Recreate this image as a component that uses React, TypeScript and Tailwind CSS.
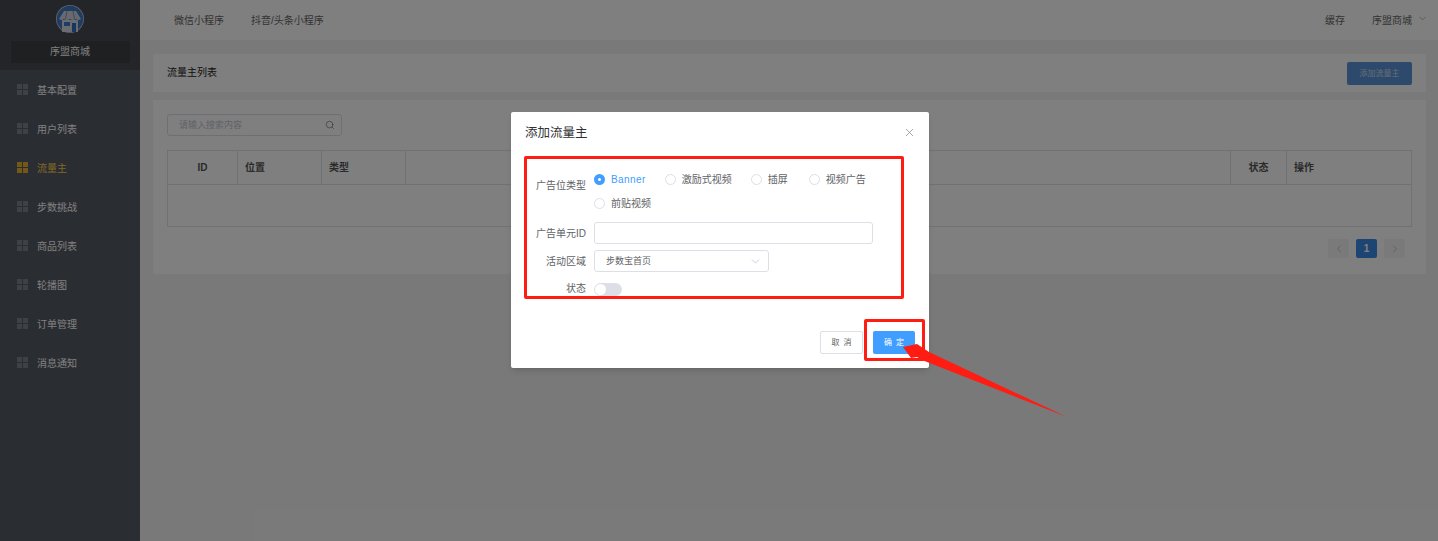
import React from 'react';
import { X, ChevronDown, ChevronLeft, ChevronRight, Search } from 'lucide-react';

const menu = ['基本配置', '用户列表', '流量主', '步数挑战', '商品列表', '轮播图', '订单管理', '消息通知'];
const radios = ['Banner', '激励式视频', '插屏', '视频广告', '前贴视频'];
const font = 'font-["Liberation_Sans","Noto_Sans_CJK_SC",sans-serif]';

const GridIcon: React.FC<{ active: boolean }> = ({ active }) => (
  <div className="grid grid-cols-2 gap-[1px] w-[11px] mr-[9px] -mt-[2px]">
    {[0, 1, 2, 3].map((i) => (
      <span key={i} className={`h-[5px] w-[5px] ${active ? 'bg-[#e8b030]' : 'bg-[#7f838a]'}`} />
    ))}
  </div>
);

const Logo = () => (
  <svg viewBox="0 0 28 28" className="w-[28px] h-[28px]">
    <circle cx="14" cy="14" r="14" fill="#c5c8cc" />
    <circle cx="14" cy="14" r="13.2" fill="#3f78c4" />
    <path d="M6 15 H22 V27 H6 Z" fill="#d5d9e0" />
    <path d="M3 14 L8 6 H20 L25 14 Q22.5 16 20 14 Q17 16 14 14 Q11 16 8 14 Q5.5 16 3 14 Z" fill="#cfd3dc" />
    <path d="M11 6 L9.5 14 M17 6 L18.5 14" stroke="#8a93a5" strokeWidth="1" />
    <rect x="8" y="17" width="6" height="4" fill="#3f78c4" />
    <rect x="16" y="18" width="4" height="9" fill="#2f6cc0" />
  </svg>
);

const Sidebar = () => (
  <aside className="w-[140px] shrink-0 bg-[#555a63]">
    <div className="h-[70px] bg-[#474b53] flex flex-col items-center pt-[5px]">
      <Logo />
      <div className="mt-[8px] w-[119px] h-[22px] rounded-[2px] bg-[#3d4045] text-white text-[10px] pb-[2px] flex items-center justify-center">序盟商城</div>
    </div>
    <div className="pt-[1px]">
      {menu.map((m, i) => (
        <div key={m} className={`h-[39px] flex items-center pl-[17px] text-[10px] ${i === 2 ? 'text-[#ffd04b]' : 'text-white'}`}>
          <GridIcon active={i === 2} />
          {m}
        </div>
      ))}
    </div>
  </aside>
);

const cols = [
  { w: 'w-[70px]', label: 'ID', cls: 'justify-center' },
  { w: 'w-[84px]', label: '位置', cls: 'pl-[7px]' },
  { w: 'w-[84px]', label: '类型', cls: 'pl-[7px]' },
  { w: 'flex-1', label: '', cls: '' },
  { w: 'w-[56px]', label: '状态', cls: 'justify-center' },
  { w: 'w-[124px]', label: '操作', cls: 'pl-[7px]' },
];

const Main = () => (
  <main className="flex-1 min-w-0 flex flex-col">
    <header className="h-[40px] bg-white flex items-center text-[10px] text-[#666] pl-[34px] pr-[10px]">
      <span>微信小程序</span>
      <span className="ml-[27px]">抖音/头条小程序</span>
      <span className="ml-auto">缓存</span>
      <span className="ml-[27px]">序盟商城</span>
      <ChevronDown strokeWidth={1.5} className="w-[11px] h-[11px] ml-[5px] -mt-[4px] text-[#999]" />
    </header>
    <div className="pl-[13px] pr-[12px] pt-[14px]">
      <div className="h-[38px] bg-white flex items-center justify-between pl-[14px] pr-[14px]">
        <span className="text-[10px] text-[#222] -mt-[1px]">流量主列表</span>
        <button className="w-[65px] h-[23px] pt-[2px] rounded-[2px] bg-[#5b93d6] text-white/70 text-[8px]">添加流量主</button>
      </div>
      <div className="mt-[8px] h-[174px] bg-white px-[14px] pt-[14px]">
        <div className="w-[175px] h-[22px] rounded-[3px] border border-[#dcdfe6] flex items-center pl-[11px] pr-[6px] text-[9px] text-[#c0c4cc]">
          <span className="pt-[2px]">请输入搜索内容</span>
          <Search strokeWidth={1.5} className="w-[10px] h-[10px] ml-auto text-[#666]" />
        </div>
        <div className="mt-[14px] border border-[#e0e3ea] h-[77px]">
          <div className="flex h-[34px] border-b border-[#e0e3ea] text-[10px] font-bold text-[#555]">
            {cols.map((c, i) => (
              <div key={i} className={`${c.w} flex items-center ${c.cls} ${i < cols.length - 1 ? 'border-r border-[#e0e3ea]' : ''}`}>{c.label}</div>
            ))}
          </div>
        </div>
        <div className="flex justify-end gap-[7px] mt-[12px] pr-[7px]">
          <div className="w-[21px] h-[19px] rounded-[2px] bg-[#f4f4f5] flex items-center justify-center text-[#c0c4cc]"><ChevronLeft className="w-[12px] h-[12px]" /></div>
          <div className="w-[21px] h-[19px] rounded-[2px] bg-[#3a8ae8] flex items-center justify-center text-white text-[10px] font-bold">1</div>
          <div className="w-[21px] h-[19px] rounded-[2px] bg-[#f4f4f5] flex items-center justify-center text-[#c0c4cc]"><ChevronRight className="w-[12px] h-[12px]" /></div>
        </div>
      </div>
    </div>
  </main>
);

const Dialog = () => (
  <div className="absolute left-[511px] top-[112px] w-[418px] h-[256px] bg-white rounded-[2px] flex flex-col shadow-md text-[10px] text-[#606266]">
    <div className="h-[55px] shrink-0 flex items-start justify-between pl-[14px] pr-[13px] pt-[11px]">
      <span className="text-[12.5px] leading-[20px] text-[#303133]">添加流量主</span>
      <X strokeWidth={1.5} className="w-[13px] h-[13px] mt-[3px] text-[#909399]" />
    </div>
    <div className="flex items-start">
      <div className="w-[75px] text-right leading-[14px] mt-[12px]">广告位类型</div>
      <div className="ml-[8px] w-[300px] flex flex-wrap">
        {radios.map((r, i) => (
          <label key={r} className={`h-[24px] flex items-center ${i === 2 ? 'mr-[21px]' : 'mr-[19px]'} ${i === 0 ? 'text-[#409eff] tracking-[0.4px]' : ''}`}>
            {i === 0 ? (
              <span className="w-[11px] h-[11px] rounded-full bg-[#409eff] flex items-center justify-center mr-[6px]"><span className="w-[3px] h-[3px] rounded-full bg-white" /></span>
            ) : (
              <span className="w-[11px] h-[11px] rounded-full border border-[#dcdfe6] mr-[6px]" />
            )}
            {r}
          </label>
        ))}
      </div>
    </div>
    <div className="flex items-center mt-[7px]">
      <div className="w-[75px] text-right">广告单元ID</div>
      <div className="ml-[8px] w-[279px] h-[22px] rounded-[3px] border border-[#dcdfe6]" />
    </div>
    <div className="flex items-center mt-[6px]">
      <div className="w-[75px] text-right">活动区域</div>
      <div className="ml-[8px] w-[175px] h-[22px] rounded-[3px] border border-[#dcdfe6] flex items-center pl-[11px] pr-[6px] text-[9px]">
        <span className="pt-[2px]">步数宝首页</span>
        <ChevronDown strokeWidth={1.5} className="w-[13px] h-[13px] ml-auto text-[#c0c4cc]" />
      </div>
    </div>
    <div className="flex items-center mt-[10px]">
      <div className="w-[75px] text-right -mt-[1px]">状态</div>
      <div className="ml-[8px] w-[28px] h-[13px] rounded-full bg-[#dcdfe6] p-[1px]"><div className="w-[11px] h-[11px] rounded-full bg-white" /></div>
    </div>
    <div className="mt-auto flex justify-end gap-[10px] pr-[14px] pb-[14px]">
      <button className="w-[43px] h-[23px] pl-[4px] rounded-[2px] border border-[#dcdfe6] text-[8px] tracking-[4px]">取消</button>
      <button className="w-[42px] h-[23px] pl-[4px] rounded-[2px] bg-[#409eff] text-white text-[8px] tracking-[4px]">确定</button>
    </div>
  </div>
);

const App: React.FC = () => (
  <div className={`relative h-[541px] overflow-hidden flex bg-[#f3f3f4] ${font}`}>
    <Sidebar />
    <Main />
    <div className="absolute inset-0 bg-black/50" />
    <Dialog />
    <div className="absolute left-[524px] top-[156px] w-[380px] h-[143px] border-[3px] border-[#ff1c12] rounded-[2px]" />
    <div className="absolute left-[864px] top-[319px] w-[61px] h-[42px] border-[3px] border-[#ff1c12] rounded-[2px]" />
    <svg className="absolute left-[890px] top-[335px] w-[190px] h-[90px]" viewBox="890 335 190 90">
      <polygon points="903,347 917,344 929,352 1067,417 922,360 917,357 911,358" fill="#ff1c12" />
    </svg>
  </div>
);

export default App;
